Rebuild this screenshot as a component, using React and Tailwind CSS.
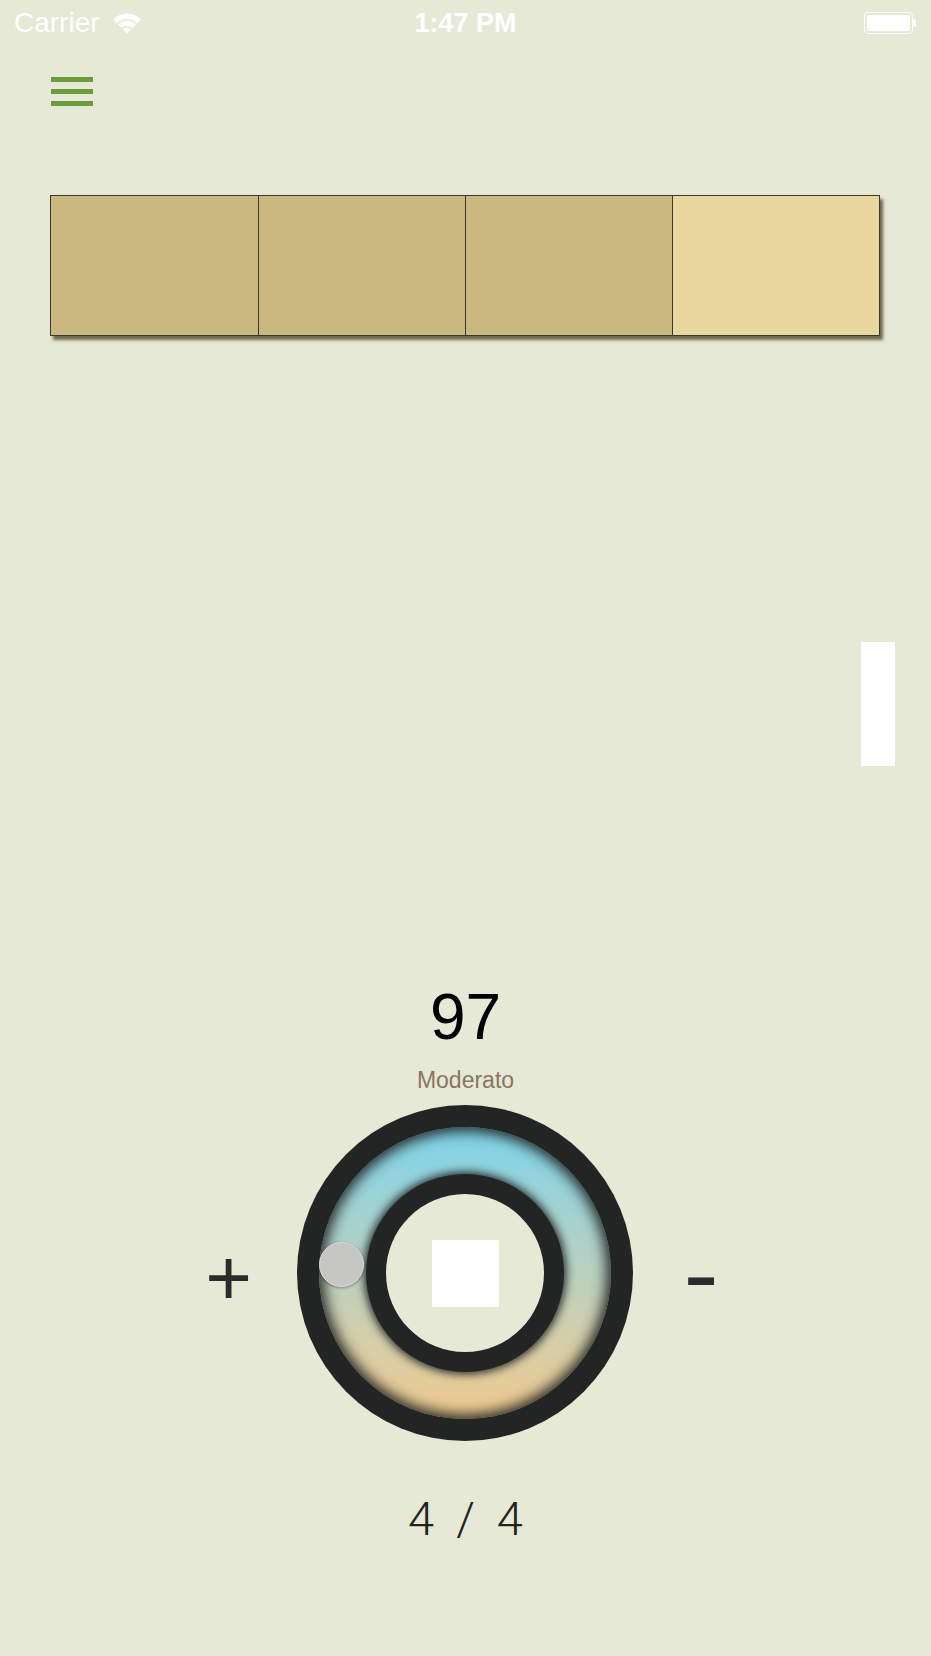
import React from "react";

function Wifi() {
  return (
    <svg width="28" height="22" viewBox="0 0 28 22" className="block">
      <g fill="#ffffff" stroke="#ffffff" strokeWidth="0.8" strokeLinejoin="round">
        <path d="M0.57 7.57 A19 19 0 0 1 27.43 7.57 L24.25 10.75 A14.5 14.5 0 0 0 3.75 10.75 Z" />
        <path d="M5.51 12.51 A12 12 0 0 1 22.49 12.51 L19.3 15.7 A7.5 7.5 0 0 0 8.7 15.7 Z" />
        <path d="M10.46 17.46 A5 5 0 0 1 17.54 17.46 L14 21 Z" />
      </g>
    </svg>
  );
}

function Dial() {
  return (
    <div className="relative w-[336px] h-[336px] rounded-full bg-[#232525] flex items-center justify-center">
      <div className="w-[292px] h-[292px] rounded-full bg-gradient-to-b from-[#7cd3ea] via-[#b9d1bf] to-[#f1c98d] shadow-[inset_0_0_14px_4px_#232525] flex items-center justify-center">
        <div className="w-[198px] h-[198px] rounded-full bg-[#232525] shadow-[0_0_10px_2px_#232525] flex items-center justify-center">
          <div className="w-[158px] h-[158px] rounded-full bg-[#e6e9d6] flex items-center justify-center">
            <div className="w-[67px] h-[67px] bg-white" />
          </div>
        </div>
      </div>
      <div className="absolute left-[22px] top-[137px] w-[45px] h-[45px] rounded-full bg-[#c6c7c5] border border-[#dcdcda] shadow-[0_1px_3px_rgba(0,0,0,0.35)]" />
    </div>
  );
}

export default function App() {
  return (
    <div
      className="w-full min-h-[1656px] bg-[#e6e9d6] flex flex-col"
      style={{ fontFamily: '"Liberation Sans", Arial, sans-serif' }}
    >
      {/* status bar */}
      <div className="h-[46px] flex items-center px-[14px] relative text-white">
        <div className="flex items-center gap-[13px]">
          <span className="text-[28px] leading-none">Carrier</span>
          <Wifi />
        </div>
        <div className="absolute left-0 right-0 flex justify-center pointer-events-none">
          <span className="text-[27px] leading-none font-bold">1:47 PM</span>
        </div>
        <div className="ml-auto mr-[1px] flex items-center">
          <div className="w-[49px] h-[22px] rounded-[4px] border border-white/90 p-[2px]">
            <div className="w-full h-full bg-white rounded-[2px]" />
          </div>
          <div className="w-[3px] h-[8px] bg-white/90 rounded-r-[2px]" />
        </div>
      </div>

      {/* hamburger */}
      <div className="pl-[51px] pt-[31px]">
        <div className="w-[42px] flex flex-col gap-[7px]">
          <div className="h-[5px] bg-[#6b9e3a]" />
          <div className="h-[5px] bg-[#6b9e3a]" />
          <div className="h-[5px] bg-[#6b9e3a]" />
        </div>
      </div>

      {/* boxes */}
      <div className="ml-[50px] mt-[89px] w-[830px] h-[141px] grid grid-cols-4 border border-[#3b392e] shadow-[3px_4px_3px_rgba(70,58,35,0.75)]">
        <div className="bg-[#cbb880]" />
        <div className="bg-[#cbb880] border-l border-[#3b392e]" />
        <div className="bg-[#cbb880] border-l border-[#3b392e]" />
        <div className="bg-[#ead69f] border-l border-[#3b392e]" />
      </div>

      {/* white bar */}
      <div className="self-end mr-[36px] mt-[306px] w-[34px] h-[124px] bg-white" />

      {/* tempo */}
      <div className="mt-[219px] flex flex-col items-center">
        <div className="text-[64px] leading-none text-black">97</div>
        <div className="mt-[20px] text-[23px] leading-none text-[#8b7560]">Moderato</div>
      </div>

      {/* dial row */}
      <div className="mt-[13px] flex items-center pl-[205px]">
        <div className="w-[47px] text-center text-[80px] leading-none text-[#2a2b2b] mr-[45px] mt-[10px]">+</div>
        <Dial />
        <div className="ml-[52px] text-[96px] leading-none text-[#2a2b2b] mt-[2px] scale-x-[1.1]">-</div>
      </div>

      {/* time signature */}
      <div
        className="mt-[54px] flex justify-center gap-[22px] text-[47px] leading-none text-[#222222] font-light"
        style={{ fontFamily: 'Roboto, "Liberation Sans", sans-serif' }}
      >
        <span>4</span>
        <span>/</span>
        <span>4</span>
      </div>
    </div>
  );
}
